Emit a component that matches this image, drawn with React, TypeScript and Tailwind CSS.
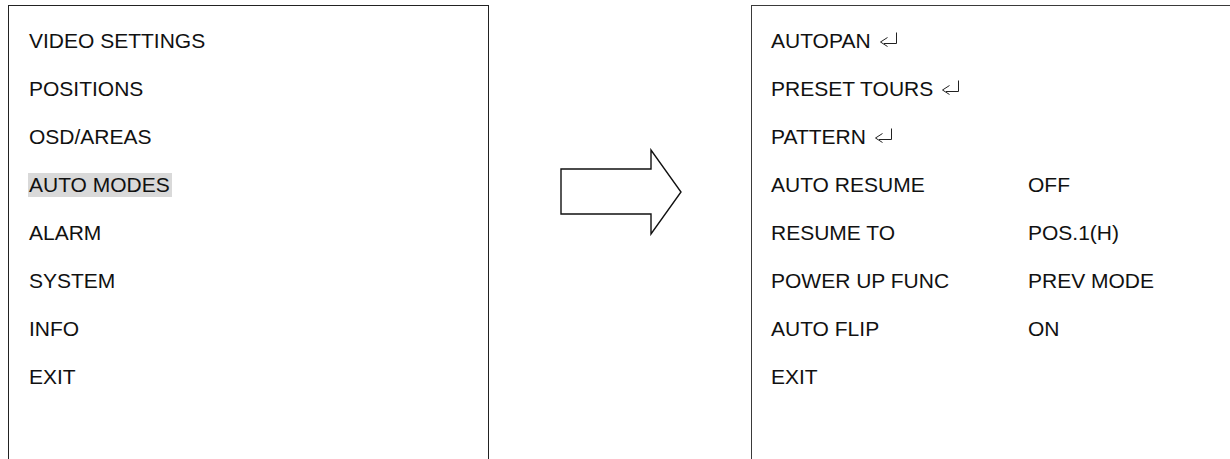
import React from 'react'

const MAIN_MENU = ['VIDEO SETTINGS', 'POSITIONS', 'OSD/AREAS', 'AUTO MODES', 'ALARM', 'SYSTEM', 'INFO', 'EXIT']

const AUTO_MODES: { label: string; value?: string; enter?: boolean }[] = [
  { label: 'AUTOPAN', enter: true },
  { label: 'PRESET TOURS', enter: true },
  { label: 'PATTERN', enter: true },
  { label: 'AUTO RESUME', value: 'OFF' },
  { label: 'RESUME TO', value: 'POS.1(H)' },
  { label: 'POWER UP FUNC', value: 'PREV MODE' },
  { label: 'AUTO FLIP', value: 'ON' },
  { label: 'EXIT' },
]

function EnterMark() {
  return (
    <svg width="20" height="16" viewBox="0 0 20 16" className="ml-[8px] mt-[3px] shrink-0" fill="none" stroke="#222" strokeWidth="1">
      <path d="M8.5 5.5 L1.5 10 L8.5 14.5" />
      <path d="M5 11.5 H17.5 V0.5" />
    </svg>
  )
}

function BigArrow() {
  return (
    <svg width="126" height="88" viewBox="0 0 126 88" fill="none" stroke="#111" strokeWidth="1.4">
      <path d="M2 21 H92 V2 L122 44 L92 86 V66 H2 Z" strokeLinejoin="miter" />
    </svg>
  )
}

export default function App() {
  return (
    <div className="h-[459px] w-[1230px] overflow-hidden bg-white text-[21px] leading-[24px] text-[#111]" style={{ fontFamily: '"Liberation Sans", Arial, sans-serif' }}>
      <div className="flex items-start pt-[5px]">
        <div className="ml-[8px] h-[480px] w-[481px] shrink-0 border border-[#222] pl-[19px] pt-[23px]">
          <div className="flex flex-col gap-[24px]">
            {MAIN_MENU.map((item) => (
              <div key={item} className="flex">
                <span className={item === 'AUTO MODES' ? 'bg-[#d9d9d9] pl-px pr-[2px]' : 'pl-px'}>{item}</span>
              </div>
            ))}
          </div>
        </div>

        <div className="flex w-[262px] shrink-0 justify-start pl-[70px] pt-[143px]">
          <BigArrow />
        </div>

        <div className="h-[480px] w-[520px] shrink-0 border-[1.5px] border-[#3a3a3a] pl-[19px] pt-[22.5px]">
          <div className="flex flex-col gap-[24px]">
            {AUTO_MODES.map((row) => (
              <div key={row.label} className="flex items-start">
                <span className="flex w-[257px] shrink-0 items-start">
                  {row.label}
                  {row.enter && <EnterMark />}
                </span>
                {row.value && <span>{row.value}</span>}
              </div>
            ))}
          </div>
        </div>
      </div>
    </div>
  )
}
